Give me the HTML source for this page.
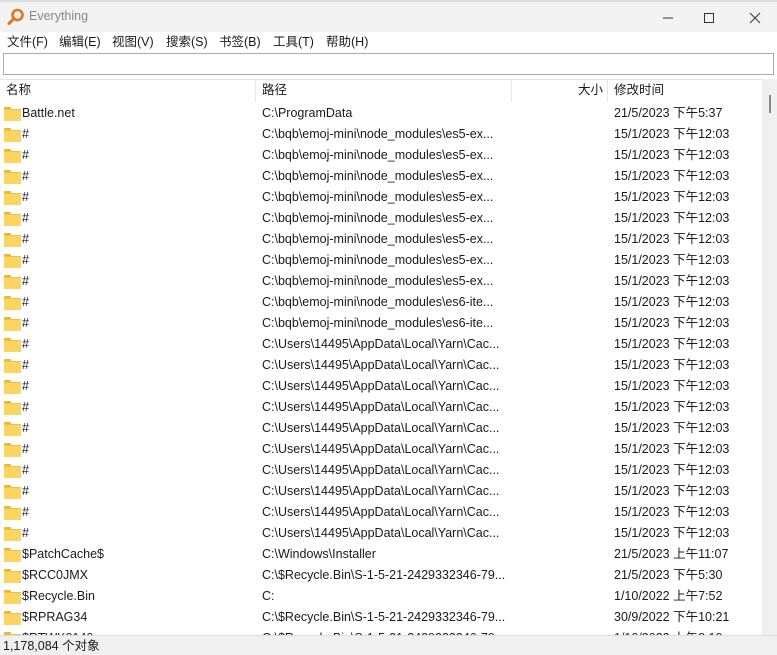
<!DOCTYPE html>
<html><head><meta charset="utf-8"><style>
*{margin:0;padding:0;box-sizing:border-box}
body{width:777px;height:655px;overflow:hidden;background:#fff;font-family:"Liberation Sans","Noto Sans CJK SC",sans-serif;font-size:12.5px;line-height:15px;color:#1a1a1a;position:relative}
span{line-height:15px}
.title{position:absolute;left:0;top:0;width:777px;height:32px;background:#f3f3f3;border-top:2px solid #ddd}
.title .t{position:absolute;left:29px;top:7px;color:#888;font-size:12.5px}
.menu{position:absolute;top:32px;left:0;width:777px;height:20px;background:#fff}
.menu span{position:absolute;top:3px;font-size:12.5px}
.search{position:absolute;left:3px;top:53px;width:771px;height:22px;border:1px solid #aaa;background:#fff}
.hdr{position:absolute;top:79px;left:0;width:762px;height:23px;border-top:1px solid #e5e5e5}
.hdr span{position:absolute;top:3px}
.sep{position:absolute;top:80px;width:1px;height:22px;background:#e5e5e5}
.sb{position:absolute;left:762px;top:79px;width:15px;height:556px;background:#f0f0f0}
.thumb{position:absolute;left:769px;top:95px;width:2px;height:18px;background:#888}
.rows{position:absolute;top:103px;left:0;width:762px;height:532px;overflow:hidden}
.r{position:relative;height:21px}
.r span{position:absolute;top:3px;white-space:nowrap}
.f{position:absolute;left:4px;top:4px;width:17px;height:13px}
.f:before{content:"";position:absolute;left:0;top:0;width:7px;height:3px;background:#e8b83c;border-radius:1px 1px 0 0}
.f:after{content:"";position:absolute;left:0;top:2px;width:17px;height:11px;background:#fcd462;border-top:1px solid #f0c040}
.n{left:22px}.p{left:262px}.d{left:614px}
.status{position:absolute;top:635px;left:0;width:777px;height:20px;background:#f0f0f0;border-top:1px solid #ddd}
.status span{position:absolute;left:3px;top:3px}
</style></head><body>
<div class="title">
<svg style="position:absolute;left:7px;top:6px" width="18" height="18" viewBox="0 0 18 18"><circle cx="10.5" cy="7" r="5" fill="none" stroke="#e8731a" stroke-width="2.6"/><line x1="7" y1="10.5" x2="2" y2="15.5" stroke="#e8731a" stroke-width="3" stroke-linecap="round"/></svg>
<span class="t">Everything</span>
<svg style="position:absolute;left:662px;top:10px" width="12" height="12"><line x1="1" y1="6" x2="11" y2="6" stroke="#333"/></svg>
<svg style="position:absolute;left:703px;top:10px" width="12" height="12"><rect x="1.5" y="1.5" width="9" height="9" fill="none" stroke="#333"/></svg>
<svg style="position:absolute;left:749px;top:10px" width="12" height="12"><path d="M1 1L11 11M11 1L1 11" stroke="#333"/></svg>
</div>
<div class="menu"><span style="left:7px">文件(F)</span><span style="left:59px">编辑(E)</span><span style="left:112px">视图(V)</span><span style="left:166px">搜索(S)</span><span style="left:219px">书签(B)</span><span style="left:273px">工具(T)</span><span style="left:326px">帮助(H)</span></div>
<div class="search"></div>
<div class="hdr"><span style="left:6px">名称</span><span style="left:262px">路径</span><span style="left:578px">大小</span><span style="left:614px">修改时间</span></div>
<div class="sep" style="left:255px"></div><div class="sep" style="left:511px"></div><div class="sep" style="left:607px"></div>
<div class="sb"></div><div class="thumb"></div>
<div class="rows">
<div class="r"><i class="f"></i><span class="n">Battle.net</span><span class="p">C:\ProgramData</span><span class="d">21/5/2023 下午5:37</span></div>
<div class="r"><i class="f"></i><span class="n">#</span><span class="p">C:\bqb\emoj-mini\node_modules\es5-ex...</span><span class="d">15/1/2023 下午12:03</span></div>
<div class="r"><i class="f"></i><span class="n">#</span><span class="p">C:\bqb\emoj-mini\node_modules\es5-ex...</span><span class="d">15/1/2023 下午12:03</span></div>
<div class="r"><i class="f"></i><span class="n">#</span><span class="p">C:\bqb\emoj-mini\node_modules\es5-ex...</span><span class="d">15/1/2023 下午12:03</span></div>
<div class="r"><i class="f"></i><span class="n">#</span><span class="p">C:\bqb\emoj-mini\node_modules\es5-ex...</span><span class="d">15/1/2023 下午12:03</span></div>
<div class="r"><i class="f"></i><span class="n">#</span><span class="p">C:\bqb\emoj-mini\node_modules\es5-ex...</span><span class="d">15/1/2023 下午12:03</span></div>
<div class="r"><i class="f"></i><span class="n">#</span><span class="p">C:\bqb\emoj-mini\node_modules\es5-ex...</span><span class="d">15/1/2023 下午12:03</span></div>
<div class="r"><i class="f"></i><span class="n">#</span><span class="p">C:\bqb\emoj-mini\node_modules\es5-ex...</span><span class="d">15/1/2023 下午12:03</span></div>
<div class="r"><i class="f"></i><span class="n">#</span><span class="p">C:\bqb\emoj-mini\node_modules\es5-ex...</span><span class="d">15/1/2023 下午12:03</span></div>
<div class="r"><i class="f"></i><span class="n">#</span><span class="p">C:\bqb\emoj-mini\node_modules\es6-ite...</span><span class="d">15/1/2023 下午12:03</span></div>
<div class="r"><i class="f"></i><span class="n">#</span><span class="p">C:\bqb\emoj-mini\node_modules\es6-ite...</span><span class="d">15/1/2023 下午12:03</span></div>
<div class="r"><i class="f"></i><span class="n">#</span><span class="p">C:\Users\14495\AppData\Local\Yarn\Cac...</span><span class="d">15/1/2023 下午12:03</span></div>
<div class="r"><i class="f"></i><span class="n">#</span><span class="p">C:\Users\14495\AppData\Local\Yarn\Cac...</span><span class="d">15/1/2023 下午12:03</span></div>
<div class="r"><i class="f"></i><span class="n">#</span><span class="p">C:\Users\14495\AppData\Local\Yarn\Cac...</span><span class="d">15/1/2023 下午12:03</span></div>
<div class="r"><i class="f"></i><span class="n">#</span><span class="p">C:\Users\14495\AppData\Local\Yarn\Cac...</span><span class="d">15/1/2023 下午12:03</span></div>
<div class="r"><i class="f"></i><span class="n">#</span><span class="p">C:\Users\14495\AppData\Local\Yarn\Cac...</span><span class="d">15/1/2023 下午12:03</span></div>
<div class="r"><i class="f"></i><span class="n">#</span><span class="p">C:\Users\14495\AppData\Local\Yarn\Cac...</span><span class="d">15/1/2023 下午12:03</span></div>
<div class="r"><i class="f"></i><span class="n">#</span><span class="p">C:\Users\14495\AppData\Local\Yarn\Cac...</span><span class="d">15/1/2023 下午12:03</span></div>
<div class="r"><i class="f"></i><span class="n">#</span><span class="p">C:\Users\14495\AppData\Local\Yarn\Cac...</span><span class="d">15/1/2023 下午12:03</span></div>
<div class="r"><i class="f"></i><span class="n">#</span><span class="p">C:\Users\14495\AppData\Local\Yarn\Cac...</span><span class="d">15/1/2023 下午12:03</span></div>
<div class="r"><i class="f"></i><span class="n">#</span><span class="p">C:\Users\14495\AppData\Local\Yarn\Cac...</span><span class="d">15/1/2023 下午12:03</span></div>
<div class="r"><i class="f"></i><span class="n">$PatchCache$</span><span class="p">C:\Windows\Installer</span><span class="d">21/5/2023 上午11:07</span></div>
<div class="r"><i class="f"></i><span class="n">$RCC0JMX</span><span class="p">C:\$Recycle.Bin\S-1-5-21-2429332346-79...</span><span class="d">21/5/2023 下午5:30</span></div>
<div class="r"><i class="f"></i><span class="n">$Recycle.Bin</span><span class="p">C:</span><span class="d">1/10/2022 上午7:52</span></div>
<div class="r"><i class="f"></i><span class="n">$RPRAG34</span><span class="p">C:\$Recycle.Bin\S-1-5-21-2429332346-79...</span><span class="d">30/9/2022 下午10:21</span></div>
<div class="r"><i class="f"></i><span class="n">$RTWK8140</span><span class="p">C:\$Recycle.Bin\S-1-5-21-2429332346-79...</span><span class="d">1/10/2022 上午8:10</span></div>
</div>
<div class="status"><span>1,178,084 个对象</span></div>
</body></html>
